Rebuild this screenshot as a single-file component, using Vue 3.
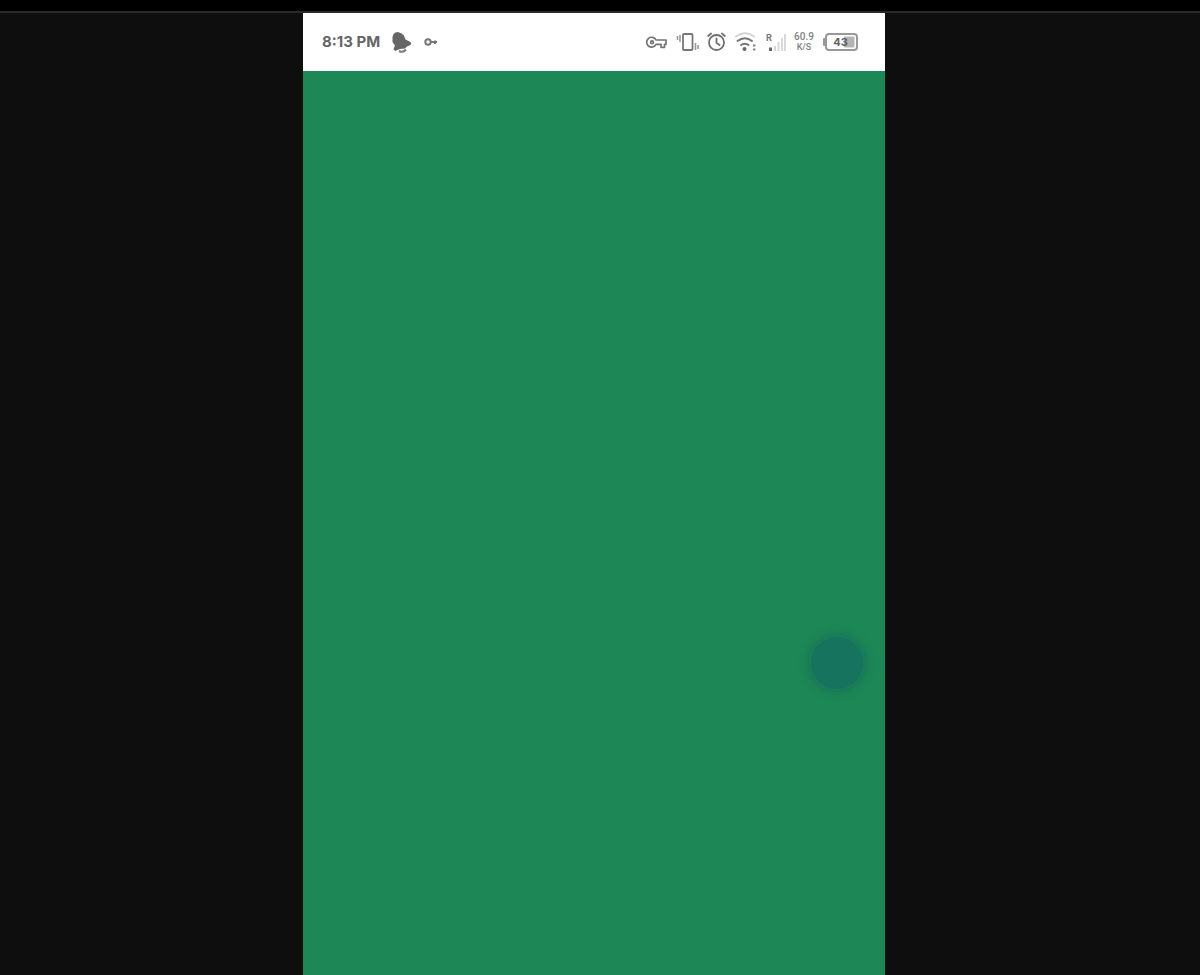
<script setup>
const time = '8:13 PM'
const speed = '60.9'
const unit = 'K/S'
const battery = 43
</script>

<template>
  <div class="viewer">
    <div class="top-strip"></div>
    <div class="stage">
      <section class="phone">
        <header class="status">
          <div class="group left">
            <time class="clock">{{ time }}</time>
            <svg width="20" height="22" viewBox="0 0 20 22" aria-label="Notification">
              <path d="M1.500 3Q3 1 6 1Q9.500 1.500 12 4.500L13.500 8.500L18.500 11Q20 12.500 18.500 14L15 15.500L13 17.500L8 18L3 20L1.500 18L3 14.500L0.500 11V6Z" fill="#666" />
              <path d="M7 20Q11 22 14 18.500" fill="none" stroke="#777" stroke-width="2" />
            </svg>
            <svg width="14" height="10" viewBox="0 0 14 10" aria-label="Key">
              <g fill="none" stroke="#777" stroke-width="2"><circle cx="4" cy="5" r="2.700" /><path d="M6.500 5H13M11 3.500V7" /></g>
            </svg>
          </div>
          <div class="group right">
            <svg width="22" height="14" viewBox="0 0 22 14" aria-label="VPN">
              <g fill="none" stroke="#747474" stroke-width="1.700" stroke-linejoin="round">
                <path d="M10 5H20V9.300H18.500V12.300H15V9.300H10A4.900 4.900 0 1 1 10 5Z" />
                <circle cx="6" cy="7.200" r="1.400" />
              </g>
            </svg>
            <svg width="25" height="20" viewBox="0 0 25 20" aria-label="Vibrate">
              <rect x="8" y="2" width="9.500" height="16" rx="1" fill="none" stroke="#777" stroke-width="1.800" />
              <path d="M5 3V10M2.500 4V8" fill="none" stroke="#999" stroke-width="1.600" />
              <path d="M20.500 11V18M23 13V17" fill="none" stroke="#999" stroke-width="1.600" />
            </svg>
            <svg width="21" height="22" viewBox="0 0 21 22" aria-label="Alarm">
              <g fill="none" stroke="#707070" stroke-width="1.800" stroke-linecap="round">
                <circle cx="9.500" cy="11.500" r="7.500" />
                <path d="M1.200 5L4 2.500M15 2.500L17.800 5M9.500 7.500V11.700L12.500 14" />
              </g>
            </svg>
            <svg width="24" height="22" viewBox="0 0 24 22" aria-label="Wi-Fi">
              <g fill="none" stroke-linecap="round">
                <path d="M1 5.500Q10-1 19 5.500" stroke="#d4d4d4" stroke-width="2" />
                <path d="M2.500 10Q10 4.500 17 10" stroke="#747474" stroke-width="2" />
                <path d="M6 14Q10 11.300 13.500 14" stroke="#747474" stroke-width="2" />
              </g>
              <circle cx="9.500" cy="18" r="2" fill="#666" />
              <path d="M18 13.500H20.500V15.500H18ZM18 17.500H20.500V19.500H18Z" fill="#888" />
            </svg>
            <div class="signal">
              <span class="roaming">R</span>
              <svg width="20" height="20" viewBox="0 0 20 20" aria-label="Signal">
                <path d="M3 15.500H6V19H3Z" fill="#666" />
                <path d="M8 14H10V19H8ZM11.500 10H13.500V19H11.500ZM15 6H17V19H15ZM18 2H20V19H18Z" fill="#d8d8d8" />
              </svg>
            </div>
            <div class="rate"><span>{{ speed }}</span><span class="unit">{{ unit }}</span></div>
            <div class="battery">
              <svg width="37" height="20" viewBox="0 0 37 20" aria-hidden="true">
                <rect x="1" y="6" width="3" height="8" rx="1" fill="#999" />
                <rect x="4" y="2" width="31" height="16" rx="3" fill="#fff" stroke="#999" stroke-width="2" />
                <rect x="22" y="4.500" width="10.500" height="11" rx="1" fill="#b5b5b5" />
              </svg>
              <span class="level">{{ battery }}</span>
            </div>
          </div>
        </header>
        <main class="screen"><span class="touch"></span></main>
      </section>
    </div>
  </div>
</template>

<style>
body { background: #0e0e0e; }
</style>

<style scoped>
.viewer {
  min-height: 100vh;
  display: flex;
  flex-direction: column;
  background: #0e0e0e;
  font-family: Inter, Roboto, sans-serif;
}
.top-strip { height: 11px; background: #000; border-bottom: 2px solid #292929; }
.stage { flex: 1; display: grid; grid-template-columns: 303fr 582fr 315fr; }
.phone { grid-column: 2; display: flex; flex-direction: column; }
.status {
  height: 58px;
  display: flex;
  align-items: center;
  justify-content: space-between;
  padding: 0 26px 0 19px;
  background: #fff;
  color: #666;
}
.group { display: flex; align-items: center; }
.left { gap: 12px; }
.right { gap: 7px; }
svg { display: block; flex: none; }
.clock { font-size: 15px; line-height: 20px; font-weight: 700; white-space: nowrap; }
.signal { position: relative; }
.roaming { position: absolute; left: 0; top: 1px; font-size: 9px; line-height: 10px; font-weight: 700; color: #777; }
.rate {
  width: 22px;
  display: flex;
  flex-direction: column;
  align-items: center;
  font: 500 10px/10px Roboto, sans-serif;
  color: #808080;
}
.unit { font-size: 9px; }
.battery { position: relative; }
.level {
  position: absolute;
  inset: 0;
  text-align: center;
  font-size: 11px;
  line-height: 20px;
  font-weight: 700;
  color: #606060;
}
.screen { flex: 1; position: relative; background: #1d8755; }
.touch {
  position: absolute;
  right: 22px;
  top: 566px;
  width: 52px;
  height: 52px;
  border-radius: 50%;
  background: #15735e;
  box-shadow: 0 0 2px 4px #1a7c59, 0 0 4px 8px #1c8257;
}
</style>
